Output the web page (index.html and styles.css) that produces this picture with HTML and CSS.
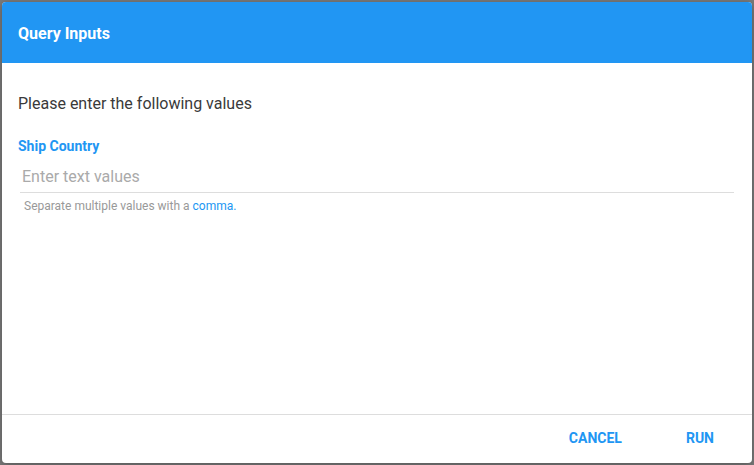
FILE: index.html
```html
<!DOCTYPE HTML>
<html>
	<head>
		<title>Query Inputs</title>
		<link rel="stylesheet" href="styles.css">
	</head>
	<body>
		<div class="backdrop">
			<div class="dialog">
				<div class="dialogHeader">Query Inputs</div>
				<div class="dialogBody">
					<div class="intro">Please enter the following values</div>
					<label class="fieldLabel" for="shipCountry">Ship Country</label>
					<input id="shipCountry" class="textInput" type="text" placeholder="Enter text values">
					<div class="helper">Separate multiple values with a <span class="accent">comma.</span></div>
				</div>
				<div class="dialogFooter">
					<button class="flatButton">CANCEL</button>
					<button class="flatButton">RUN</button>
				</div>
			</div>
		</div>
	</body>
</html>
```

FILE: styles.css
```css
html, body
{
	margin: 0;
	height: 100%;
}
body
{
	font-family: Roboto, "Liberation Sans", sans-serif;
	background-color: #7a7a7a;
}
.backdrop
{
	box-sizing: border-box;
	height: 465px;
	padding: 2px 2px 2px 2px;
}
.dialog
{
	width: 750px;
	height: 461px;
	background-color: white;
	border-radius: 4px;
	overflow: hidden;
	display: flex;
	flex-direction: column;
	box-shadow: 0 2px 8px rgba(0, 0, 0, 0.3);
}
.dialogHeader
{
	background-color: #2196f3;
	color: white;
	height: 61px;
	line-height: 64px;
	padding-left: 16px;
	font-size: 16px;
	font-weight: bold;
}
.dialogBody
{
	flex: 1;
	padding: 31px 16px 0 16px;
	display: flex;
	flex-direction: column;
}
.intro
{
	color: #3a3a3a;
	font-size: 16px;
}
.fieldLabel
{
	color: #2196f3;
	font-size: 14px;
	font-weight: bold;
	margin-top: 25px;
}
.textInput
{
	margin: 7px 2px 0 2px;
	border: none;
	border-bottom: 1px solid #ddd;
	padding: 6px 2px 6px 2px;
	font-family: Roboto, "Liberation Sans", sans-serif;
	font-size: 16px;
	outline: none;
}
.textInput::placeholder
{
	color: #aaa;
}
.helper
{
	color: #999;
	font-size: 12px;
	margin-top: 6px;
	margin-left: 6px;
}
.accent
{
	color: #2196f3;
}
.dialogFooter
{
	box-sizing: border-box;
	height: 49px;
	border-top: 1px solid #ddd;
	display: flex;
	justify-content: flex-end;
	align-items: center;
	padding: 0 22px 2px 0;
	gap: 32px;
}
.flatButton
{
	background: transparent;
	border: none;
	color: #2196f3;
	font-family: Roboto, "Liberation Sans", sans-serif;
	font-size: 14px;
	font-weight: bold;
	padding: 8px 16px;
}
```
